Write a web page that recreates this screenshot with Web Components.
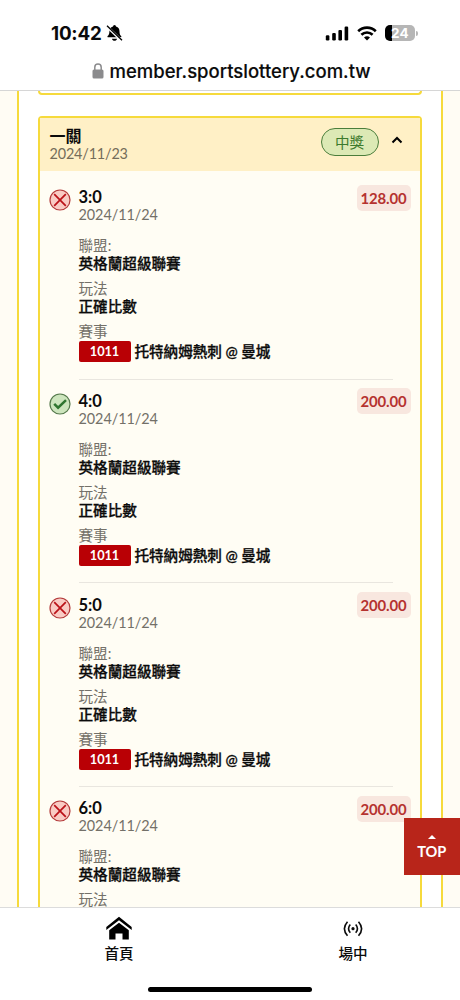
<!DOCTYPE html>
<html lang="zh-Hant">
<head>
<meta charset="utf-8">
<title>投注紀錄</title>
<style>
html,body{margin:0;height:100%;overflow:hidden;background:#fff}
body{font-family:Lato,"Noto Sans CJK TC",sans-serif;font-size:14.6px;color:#0b0b0b}
</style>
</head>
<body>
<lottery-app></lottery-app>
<script>
function define(name, html) {
  const t = document.createElement('template');
  customElements.define(name, class extends HTMLElement {
    constructor() {
      super();
      t.innerHTML = typeof html === 'function' ? html(this) : html;
      this.attachShadow({mode: 'open'}).append(t.content.cloneNode(true));
    }
  });
}

define('status-bar', `
<style>
:host{display:flex;justify-content:space-between;align-items:center;box-sizing:border-box;height:66px;padding:0 42px 0 51px;font-family:Inter,sans-serif}
.l,.r{display:flex;align-items:center}
.t{font-size:18.8px;font-weight:700;letter-spacing:-.2px}
.l svg{margin-left:4px}
.r{gap:8px}
.b{display:flex;align-items:center;gap:1px}
.p{width:30px;height:16px;border-radius:5px;background:linear-gradient(90deg,#000 7px,#b6b6b6 7px);color:#fff;font-size:13.5px;line-height:16px;font-weight:700;text-align:center;letter-spacing:.2px}
.n{width:2px;height:5px;border-radius:0 2px 2px 0;background:#b6b6b6}
svg{display:block}
</style>
<div class="l"><span class="t">10:42</span>
<svg width="17" height="18" viewBox="0 0 17 18"><path d="M7 2.4a1.5 1.5 0 0 1 3 0c2.500.6 3.500 2.600 3.500 5 0 3 .8 3.600 1.700 4.600.4.5.2 1.300-.6 1.300H2.200c-.8 0-1-.8-.6-1.300.9-1 1.800-1.600 1.800-4.600 0-2.400 1.100-4.400 3.600-5zM6 14.700h5c-.4 2.700-4.600 2.700-5 0z"/><path d="M1 2.500 16 17" stroke="#fff" stroke-width="2.600"/><path d="M1 1.700 16 16.200" stroke="#000" stroke-width="1.300"/></svg></div>
<div class="r">
<svg width="24" height="15" viewBox="0 0 24 15"><rect x="0.800" y="9.200" width="3.600" height="5.300" rx="1.200"/><rect x="7.200" y="6.900" width="3.600" height="7.600" rx="1.200"/><rect x="13.400" y="3.900" width="3.600" height="10.600" rx="1.200"/><rect x="19.600" y="0.500" width="3.600" height="14" rx="1.200"/></svg>
<svg width="20" height="15" viewBox="0 0 20 15" fill="none" stroke="#000" stroke-width="2.600"><path d="M1.200 5.200a12.600 12.600 0 0 1 17.600 0"/><path d="M4.400 8.800a8 8 0 0 1 11.200 0"/><path d="M10 14.500 7 11.600a4.300 4.300 0 0 1 6 0z" fill="#000" stroke="none"/></svg>
<div class="b"><div class="p">24</div><div class="n"></div></div></div>`);

define('address-bar', `
<style>
:host{display:flex;box-sizing:border-box;height:25px;padding:0 0 15px 91.500px;align-items:center;gap:6px;font:500 18.5px/24px Inter,sans-serif;border-bottom:1px solid #d6d6d6;-webkit-text-stroke:.15px #0b0b0b}
svg{display:block;flex:none}
span{white-space:nowrap}
</style>
<svg width="12" height="16" viewBox="0 0 12 16"><rect x=".5" y="6.500" width="11" height="9" rx="1.500" fill="#8b8b8d"/><path d="M2.800 7V4.300a3.200 3.200 0 0 1 6.400 0V7" fill="none" stroke="#8b8b8d" stroke-width="1.500"/></svg>
<span><slot></slot></span>`);

define('result-icon', el => `
<style>:host{display:block;width:22px;height:22px}svg{display:block}</style>` +
(el.getAttribute('type') === 'win'
 ? `<svg width="22" height="22" viewBox="0 0 22 22"><circle cx="11" cy="11" r="10" fill="#cde5bd" stroke="#54794b" stroke-width="1.200"/><path d="m5.200 10.800 3.900 3.900 7.900-7.500" fill="none" stroke="#2f752f" stroke-width="2.500"/></svg>`
 : `<svg width="22" height="22" viewBox="0 0 22 22"><circle cx="11" cy="11" r="10" fill="#f9cbc4" stroke="#b43a3a" stroke-width="1.200"/><path d="m5.200 5.200 11.600 11.600M16.800 5.200 5.200 16.800" fill="none" stroke="#bb1118" stroke-width="1.700"/></svg>`));

define('bet-entry', el => `
<style>
:host{display:grid;grid-template-columns:29.500px 1fr;padding:0 9.500px 0 9px;height:203.7px}
result-icon{margin-top:1px}
.row{display:flex;justify-content:space-between;height:35px}
.amt{box-sizing:border-box;width:54px;height:26px;margin-top:-3.500px;border-radius:5px;background:#f8e7df;color:#b5322f;font-weight:700;font-size:14.9px;letter-spacing:-.15px;line-height:26px;text-align:center}
.s{font-weight:700;font-size:16.5px;line-height:18px}
.d,.k{color:#737068}
.d{font-size:14.4px;letter-spacing:-.05px;line-height:17px}
.k{line-height:18px;height:18px;margin-top:7px}
.k.f{margin-top:14px}
.v,.m{-webkit-text-stroke:.3px #0b0b0b}
.v{line-height:18px;height:18px;font-weight:500}
.m{display:flex;align-items:center;height:21px;gap:4px;font-weight:500;line-height:21px;white-space:nowrap;letter-spacing:-.05px}
.n{width:52px;height:21px;border-radius:2px;background:#b90005;color:#fff;font-size:12.8px;letter-spacing:-.1px;font-weight:700;text-align:center;-webkit-text-stroke:0}
.h{height:1px;background:#e9e6df;margin:16.500px 18px 0 0}
</style>
<result-icon type="${el.getAttribute('type')}"></result-icon>
<div>
<div class="row"><div><div class="s">${el.getAttribute('score')}</div><div class="d">2024/11/24</div></div><div class="amt">${el.getAttribute('amount')}</div></div>
<div class="k f">聯盟:</div><div class="v">英格蘭超級聯賽</div>
<div class="k">玩法</div>${el.hasAttribute('short') ? '' : `<div class="v">正確比數</div>
<div class="k">賽事</div><div class="m"><span class="n">1011</span><span>托特納姆熱刺 @ 曼城</span></div>
<div class="h"></div>`}
</div>`);

define('bet-card', `
<style>
:host{display:block;border:2px solid #f6da3c;border-radius:4px;background:#fffdf4}
header{display:flex;align-items:center;box-sizing:border-box;height:53px;background:#fff0c6;padding:0 17px 0 9.500px}
.t{flex:1;margin-top:-1px}
.a{font-size:16px;font-weight:700;line-height:18px}
.b{color:#746d5a;font-size:14.4px;letter-spacing:-.15px;line-height:17px}
.w{box-sizing:border-box;width:58px;height:28px;border:1px solid #4b7d3b;border-radius:14px;background:#dce9b5;color:#3c7a2d;line-height:27px;text-align:center;margin:-6px 12.500px 0 0}
svg{display:block;margin-top:-9px}
.e{padding-top:17.300px}
</style>
<header><div class="t"><div class="a">一關</div><div class="b">2024/11/23</div></div><div class="w">中獎</div>
<svg width="12" height="8" viewBox="0 0 12 8"><path d="M1.500 6.500 6 2l4.500 4.500" fill="none" stroke="#000" stroke-width="2"/></svg></header>
<div class="e"><slot></slot></div>`);

define('bet-list', `
<style>
:host{display:block;box-sizing:border-box;flex:1;min-height:0;overflow:hidden;padding:0 17px;background:#fffcf4}
.in{height:1200px;border:solid #f6da3c;border-width:0 2px;background:#fff;padding:0 19px}
.prev{height:2px;border:2px solid #f6da3c;border-top:0;border-radius:0 0 4px 4px;margin-bottom:21px}
</style>
<div class="in"><div class="prev"></div><slot></slot></div>`);

define('tab-bar', `
<style>
:host{display:flex;flex-direction:column;box-sizing:border-box;height:93px;border-top:1px solid #dcdcdc;background:#fff;align-items:center;justify-content:space-between;padding-bottom:8.500px}
nav{display:grid;grid-template-columns:238px 230px;width:460px}
.i{display:flex;flex-direction:column;align-items:center;font-weight:500;line-height:20px}
svg{display:block;height:26px;margin:8px 0 2px}
.bar{width:164px;height:5px;border-radius:3px;background:#000}
</style>
<nav><div class="i"><svg width="26" height="26" viewBox="0 0 26 26"><path d="M0.300 11 13 .8l12.700 10.200v3L13 4.200.3 14zM3.200 14.300 13 6.800l9.800 7.500v9.300h-6.300v-6.200H9.500v6.200H3.200z"/></svg>首頁</div>
<div class="i"><svg width="20" height="26" viewBox="0 0 20 26" fill="none" stroke="#0b0b0b" stroke-width="1.600"><circle cx="10" cy="12.700" r="1.600" fill="#0b0b0b" stroke="none"/><path d="M7.300 8.600Q3.800 12.700 7.300 16.800M12.700 8.600Q16.200 12.700 12.700 16.800M4.500 5.700Q-1.700 12.700 4.500 19.700M15.500 5.700Q21.700 12.700 15.500 19.700"/></svg>場中</div></nav>
<div class="bar"></div>`);

define('top-button', `
<style>
:host{position:absolute;right:0;top:818px;width:56.500px;height:56.500px;background:#b8251a;color:#fff;display:flex;flex-direction:column;align-items:center;font-weight:700;line-height:18px;letter-spacing:-.1px}
i{width:0;height:0;border:4.500px solid transparent;border-top:0;border-bottom-color:#fff;margin:16.500px 0 4px}
</style><i></i><slot></slot>`);

define('lottery-app', `
<style>:host{display:flex;flex-direction:column;position:relative;width:460px;height:1000px;overflow:hidden}</style>
<status-bar></status-bar>
<address-bar>member.sportslottery.com.tw</address-bar>
<bet-list><bet-card>
<bet-entry type="lose" score="3:0" amount="128.00"></bet-entry>
<bet-entry type="win" score="4:0" amount="200.00"></bet-entry>
<bet-entry type="lose" score="5:0" amount="200.00"></bet-entry>
<bet-entry type="lose" score="6:0" amount="200.00" short></bet-entry>
</bet-card></bet-list>
<tab-bar></tab-bar>
<top-button>TOP</top-button>`);
</script>
</body>
</html>
